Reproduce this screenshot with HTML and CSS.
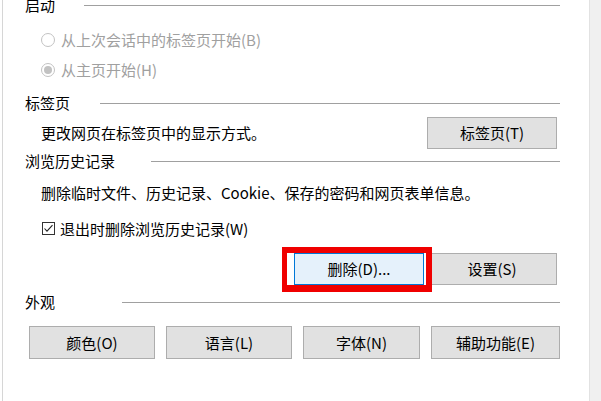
FILE: index.html
```html
<!DOCTYPE html>
<html lang="zh-CN">
<head>
<meta charset="utf-8">
<title>Internet 选项</title>
<link rel="stylesheet" href="styles.css">
</head>
<body>
<div class="page">
  <div class="edge"></div>
  <main class="panel">
    <div class="content">
      <div class="group-title"><span class="label label-startup">启动</span><span class="rule"></span></div>
      <div class="option first-option disabled">
        <svg class="radio" width="14" height="14" viewBox="0 0 14 14"><circle cx="7" cy="7" r="6.5" fill="#fff" stroke="#c2c2c2"/></svg>
        <span>从上次会话中的标签页开始(B)</span>
      </div>
      <div class="option disabled">
        <svg class="radio" width="14" height="14" viewBox="0 0 14 14"><circle cx="7" cy="7" r="6.5" fill="#fff" stroke="#c2c2c2"/><circle cx="7" cy="7" r="4" fill="#c2c2c2"/></svg>
        <span>从主页开始(H)</span>
      </div>

      <div class="group-title title-tabs"><span class="label label-tabs">标签页</span><span class="rule"></span></div>
      <div class="tab-row">
        <span class="desc">更改网页在标签页中的显示方式。</span>
        <button class="btn btn-wide">标签页(T)</button>
      </div>

      <div class="group-title title-history"><span class="label label-history">浏览历史记录</span><span class="rule"></span></div>
      <div class="desc-row"><span class="desc">删除临时文件、历史记录、Cookie、保存的密码和网页表单信息。</span></div>
      <div class="option check-row">
        <svg class="checkbox" width="14" height="14" viewBox="0 0 14 14"><rect x="1.5" y="0.5" width="12" height="12" fill="#fff" stroke="#333"/><polyline points="3.5,6.5 6,9.2 11.5,3.2" fill="none" stroke="#222" stroke-width="1.1"/></svg>
        <span>退出时删除浏览历史记录(W)</span>
      </div>
      <div class="action-row">
        <div class="highlight-wrap">
          <button class="btn btn-wide btn-focus">删除(D)...</button>
          <span class="highlight"></span>
        </div>
        <button class="btn btn-wide">设置(S)</button>
      </div>

      <div class="group-title title-look"><span class="label label-look">外观</span><span class="rule"></span></div>
      <div class="look-row">
        <button class="btn btn-tall w126">颜色(O)</button>
        <button class="btn btn-tall w126">语言(L)</button>
        <button class="btn btn-tall w117">字体(N)</button>
        <button class="btn btn-tall w129">辅助功能(E)</button>
      </div>
    </div>
  </main>
  <div class="sidebar"></div>
</div>
</body>
</html>
```
FILE: styles.css
```css
* { box-sizing: border-box; }

html, body {
  margin: 0;
  padding: 0;
  background: #fff;
}

body {
  width: 601px;
  height: 401px;
  overflow: hidden;
  font-family: "Noto Sans CJK SC", "Noto Sans", sans-serif;
  font-size: 15px;
  line-height: 20px;
  color: #000;
}

.page {
  display: flex;
  width: 601px;
  height: 401px;
}

.edge {
  width: 2px;
  background: #fff;
}

.panel {
  flex: 1;
  border-left: 1px solid #d6d6d6;
  padding: 0 29px 0 22px;
  background: #fff;
}

.sidebar {
  width: 12px;
  background: #f0f0f0;
  border-left: 1px solid #e2e2e2;
}

.content {
  margin-top: -6px;
  display: flex;
  flex-direction: column;
}

.group-title {
  height: 22px;
  display: flex;
  align-items: center;
}

.label { flex: none; }
.label-startup { width: 59px; }
.label-tabs { width: 75px; }
.label-history { width: 126px; }
.label-look { width: 97px; }

.rule {
  flex: 1;
  height: 1px;
  background: #a0a0a0;
}

.title-tabs { margin-top: 7px; }
.title-history { margin-top: 1px; }
.title-look { margin-top: 6px; }

.option {
  height: 30px;
  display: flex;
  align-items: center;
  padding-left: 16px;
  gap: 6px;
}

.first-option { margin-top: 9px; }

.disabled { color: #a0a0a0; }

.radio, .checkbox { flex: none; display: block; }

.check-row {
  margin-top: 6px;
  gap: 5px;
}

.tab-row {
  margin-top: 3px;
  height: 32px;
  display: flex;
  align-items: center;
  justify-content: space-between;
  padding-left: 16px;
  padding-right: 3px;
}

.desc-row {
  margin-top: 6px;
  height: 30px;
  display: flex;
  align-items: center;
  padding-left: 16px;
}

.action-row {
  margin-top: 9px;
  height: 32px;
  display: flex;
  justify-content: flex-end;
  gap: 3px;
  padding-right: 3px;
}

.look-row {
  margin-top: 13px;
  display: flex;
  gap: 11px;
  padding-left: 4px;
}

.btn {
  font-family: inherit;
  font-size: 15px;
  line-height: 20px;
  color: #000;
  background: #e1e1e1;
  border: 1px solid #adadad;
  border-radius: 0;
  padding: 0;
  margin: 0;
  height: 32px;
}

.btn-wide { width: 130px; }
.btn-tall { height: 33px; }
.w126 { width: 126px; }
.w117 { width: 117px; }
.w129 { width: 129px; }

.btn-focus {
  background: #e5f1fb;
  border-color: #0078d7;
}

.highlight-wrap {
  position: relative;
  z-index: 2;
}

.highlight {
  position: absolute;
  left: -12px;
  top: -6px;
  width: 150px;
  height: 45px;
  border: 6px solid #f00000;
  border-left-width: 5px;
  border-bottom-width: 7px;
  pointer-events: none;
}
```
